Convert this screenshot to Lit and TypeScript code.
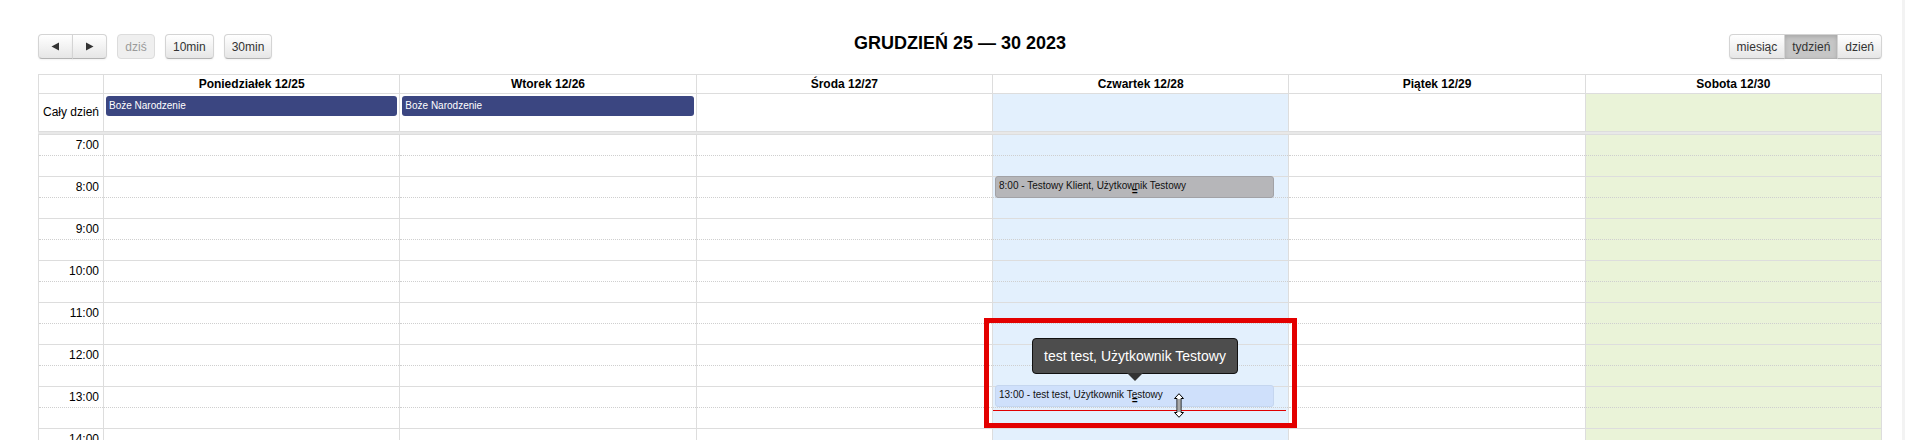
import { LitElement, css, html, nothing } from "lit";
import { customElement } from "lit/decorators.js";

const DAYS = [
  { label: "Poniedziałek 12/25", kind: "", holiday: "Boże Narodzenie" },
  { label: "Wtorek 12/26", kind: "", holiday: "Boże Narodzenie" },
  { label: "Środa 12/27", kind: "", holiday: "" },
  { label: "Czwartek 12/28", kind: "today", holiday: "" },
  { label: "Piątek 12/29", kind: "", holiday: "" },
  { label: "Sobota 12/30", kind: "sat", holiday: "" },
];

const HOURS = [7, 8, 9, 10, 11, 12, 13, 14];

@customElement("app-root")
export class AppRoot extends LitElement {
  static styles = css`
    :host {
      display: flex;
      height: 440px;
      overflow: hidden;
      position: relative;
      background: #fff;
      color: #000;
      font-family: "Liberation Sans", Arial, sans-serif;
      font-size: 12px;
    }

    .page {
      flex: 1;
      min-width: 0;
      padding: 34px 20px 0 38px;
    }

    .edge {
      width: 3px;
      background: #f3f3f3;
    }

    .toolbar {
      display: grid;
      grid-template-columns: 1fr auto 1fr;
      align-items: center;
      height: 25px;
      margin-bottom: 15px;
    }

    .tools {
      display: flex;
      gap: 10px;
    }

    .tools.right {
      justify-content: flex-end;
    }

    h2 {
      margin: 0;
      position: relative;
      top: -4px;
      font-size: 18px;
      line-height: 20px;
      font-weight: bold;
    }

    .group {
      display: flex;
    }

    button {
      height: 25px;
      padding: 0 7px;
      border: 1px solid #d4d4d4;
      border-bottom-color: #b3b3b3;
      border-radius: 4px;
      background: linear-gradient(#fff, #e6e6e6);
      box-shadow: inset 0 1px 0 rgba(255, 255, 255, 0.2), 0 1px 2px rgba(0, 0, 0, 0.05);
      color: #333;
      font: 12px "Liberation Sans", Arial, sans-serif;
    }

    button.disabled {
      width: 38px;
      padding: 0;
      background: #efefef;
      color: #9a9a9a;
      border-color: #dcdcdc;
      box-shadow: none;
    }

    .group button {
      border-radius: 0;
      margin-left: -1px;
    }

    .group button:first-child {
      border-radius: 4px 0 0 4px;
      margin-left: 0;
    }

    .group button:last-child {
      border-radius: 0 4px 4px 0;
    }

    .group button.active {
      background: #c6c6c6;
      box-shadow: inset 0 2px 4px rgba(0, 0, 0, 0.15);
    }

    .arrow {
      display: flex;
      align-items: center;
      justify-content: center;
      width: 35px;
      padding: 0;
    }

    .cal {
      border-top: 1px solid #ddd;
      border-right: 1px solid #ddd;
    }

    .row {
      display: grid;
      grid-template-columns: 65px repeat(6, 1fr);
    }

    .row > div {
      border-left: 1px solid #ddd;
      min-width: 0;
    }

    .head {
      height: 18px;
      line-height: 18px;
      border-bottom: 1px solid #ddd;
      font-weight: bold;
      text-align: center;
    }

    .allday {
      height: 37px;
      border-bottom: 1px solid #ddd;
    }

    .allday .label {
      padding-right: 4px;
      line-height: 37px;
      text-align: right;
    }

    .allday .cell {
      padding: 2px 2px 0 2px;
    }

    .today {
      background: #e3f0fd;
    }

    .sat {
      background: #eaf3d8;
    }

    .holiday {
      height: 20px;
      line-height: 19px;
      padding-left: 3px;
      border-radius: 3px;
      background: #3b4681;
      color: #fff;
      font-size: 10px;
    }

    .divider {
      height: 2px;
      background: #e8e8e8;
      border-bottom: 1px solid #ddd;
    }

    .slot {
      box-sizing: border-box;
      height: 21px;
      border-bottom: 1px dotted #cfcfcf;
    }

    .slot.hour {
      border-bottom: 1px solid #ddd;
    }

    .time {
      padding-right: 4px;
      line-height: 20px;
      text-align: right;
    }

    .day {
      position: relative;
    }

    .event {
      position: absolute;
      left: 2px;
      right: 14px;
      box-sizing: border-box;
      height: 22px;
      padding-left: 3px;
      line-height: 18px;
      border: 1px solid;
      border-radius: 3px;
      font-size: 10px;
      color: #111;
    }

    .event.gray {
      top: 41px;
      background: #b6b6b9;
      border-color: #a2a2a6;
    }

    .event.blue {
      top: 250px;
      background: #cfe0fb;
      border-color: #c5d6ef;
    }

    .resizer {
      position: absolute;
      left: 0;
      right: 0;
      bottom: 0;
      height: 9px;
      text-align: center;
      color: #000;
      font: bold 10px/9px "Liberation Mono", monospace;
    }

    .tip {
      position: absolute;
      left: 1032px;
      top: 338px;
      box-sizing: border-box;
      width: 206px;
      height: 36px;
      line-height: 34px;
      background: #4d4d4d;
      border: 1px solid #111;
      border-radius: 4px;
      color: #fff;
      font-size: 14px;
      text-align: center;
    }

    .tip::after {
      content: "";
      position: absolute;
      left: 50%;
      top: 100%;
      margin-left: -8px;
      border: 8px solid transparent;
      border-bottom: 0;
      border-top-color: #333;
    }

    .mark {
      position: absolute;
      left: 984px;
      top: 318px;
      box-sizing: border-box;
      width: 313px;
      height: 110px;
      border: 5px solid #e30000;
    }

    .line {
      position: absolute;
      left: 993px;
      top: 410px;
      width: 293px;
      height: 1px;
      background: #e00000;
    }

    .cursor {
      position: absolute;
      left: 1173px;
      top: 393px;
    }
  `;

  private slots() {
    return HOURS.map(() => html`<div class="slot"></div><div class="slot hour"></div>`);
  }

  render() {
    return html`
      <div class="page">
        <div class="toolbar">
          <div class="tools">
            <div class="group">
              <button class="arrow" aria-label="poprzedni">
                <svg width="9" height="9" viewBox="0 0 9 9"><path d="M0.5 4.5 8 .5V8.500Z" fill="#333" /></svg>
              </button>
              <button class="arrow" aria-label="następny">
                <svg width="9" height="9" viewBox="0 0 9 9"><path d="M8.500 4.500 1 .5V8.500Z" fill="#333" /></svg>
              </button>
            </div>
            <button class="disabled">dziś</button>
            <button>10min</button>
            <button>30min</button>
          </div>
          <h2>GRUDZIEŃ 25 — 30 2023</h2>
          <div class="tools right">
            <div class="group">
              <button>miesiąc</button>
              <button class="active">tydzień</button>
              <button>dzień</button>
            </div>
          </div>
        </div>

        <div class="cal">
          <div class="row head">
            <div></div>
            ${DAYS.map((d) => html`<div>${d.label}</div>`)}
          </div>
          <div class="row allday">
            <div class="label">Cały dzień</div>
            ${DAYS.map(
              (d) => html`<div class="cell ${d.kind}">
                ${d.holiday ? html`<div class="holiday">${d.holiday}</div>` : nothing}
              </div>`,
            )}
          </div>
          <div class="divider"></div>
          <div class="row">
            <div>
              ${HOURS.map(
                (h) => html`<div class="slot time">${h}:00</div><div class="slot hour"></div>`,
              )}
            </div>
            ${DAYS.map(
              (d) => html`<div class="day ${d.kind}">
                ${this.slots()}
                ${d.kind === "today"
                  ? html`
                      <div class="event gray">
                        8:00 - Testowy Klient, Użytkownik Testowy
                        <div class="resizer">=</div>
                      </div>
                      <div class="event blue">
                        13:00 - test test, Użytkownik Testowy
                        <div class="resizer">=</div>
                      </div>
                    `
                  : nothing}
              </div>`,
            )}
          </div>
        </div>
      </div>
      <div class="edge"></div>

      <div class="tip">test test, Użytkownik Testowy</div>
      <div class="mark"></div>
      <div class="line"></div>
      <svg class="cursor" width="12" height="25" viewBox="0 0 12 25">
        <path
          d="M6 .7 10.500 5.500H8V19.500H10.500L6 24.300 1.500 19.500H4V5.500H1.500Z"
          fill="#fff"
          stroke="#000"
          stroke-width="1"
        />
        <path d="M6 6V19" stroke="#555" stroke-width="1" />
      </svg>
    `;
  }
}
